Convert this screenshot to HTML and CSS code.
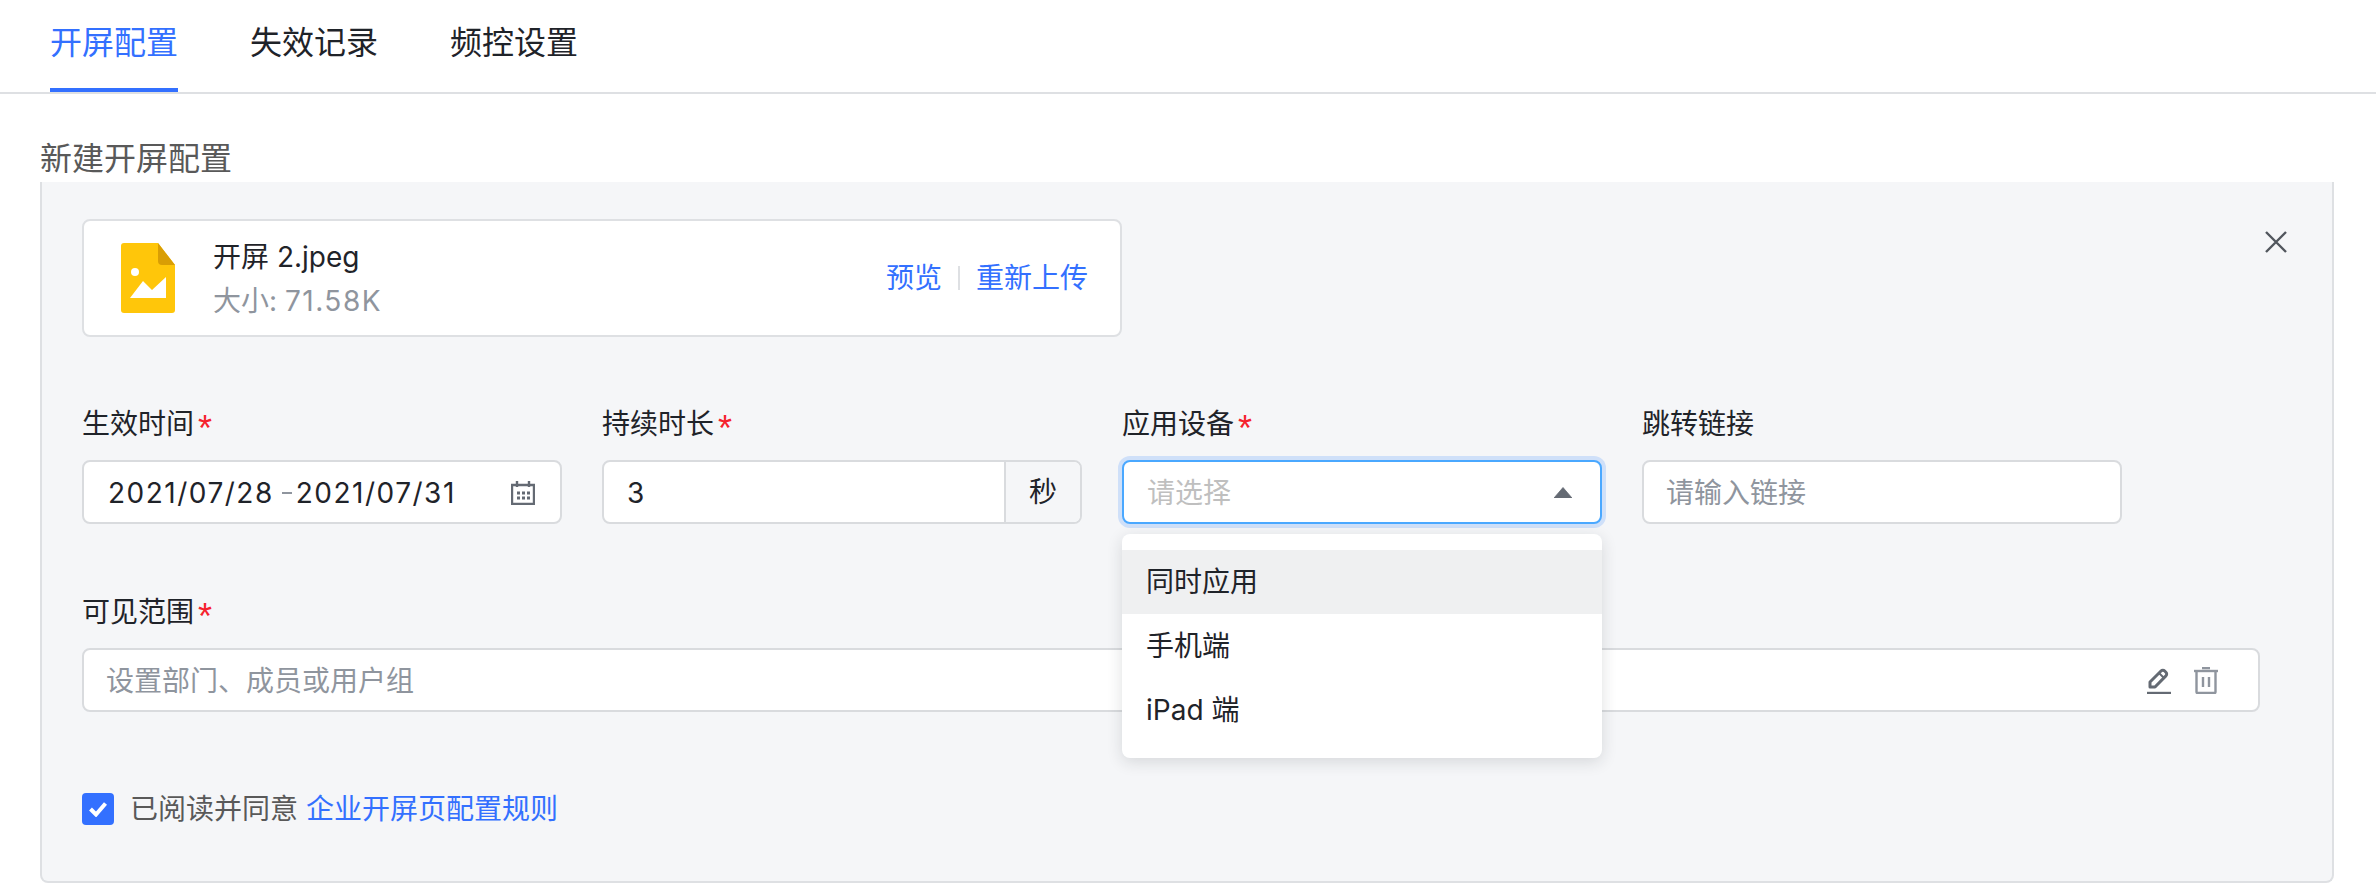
FILE: index.html
```html
<!DOCTYPE html>
<html lang="zh-CN">
<head>
<meta charset="utf-8">
<title>开屏配置</title>
<link rel="stylesheet" href="styles.css">
</head>
<body>
<nav class="tabs">
  <a class="tab tab-active">开屏配置</a>
  <a class="tab">失效记录</a>
  <a class="tab">频控设置</a>
</nav>
<h2 class="title">新建开屏配置</h2>
<section class="panel">
  <button class="close" aria-label="关闭">
    <svg width="24" height="24" viewBox="0 0 24 24"><path d="M2 2 L22 22 M22 2 L2 22" stroke="#51565d" stroke-width="2.4" fill="none"/></svg>
  </button>
  <div class="file-card">
    <svg class="file-icon" width="54" height="70" viewBox="0 0 54 70">
      <path d="M3 0 H37 L54 22 V67 a3 3 0 0 1 -3 3 H3 a3 3 0 0 1 -3 -3 V3 a3 3 0 0 1 3 -3 Z" fill="#ffc60a"/>
      <path d="M37 0 L54 22 H41 a4 4 0 0 1 -4 -4 Z" fill="#d99e04"/>
      <circle cx="14" cy="29" r="4" fill="#fff"/>
      <path d="M9 55 L22 38 L31 47 L45 34 V55 Z" fill="#fff"/>
    </svg>
    <div class="file-info">
      <div class="file-name">开屏 2.jpeg</div>
      <div class="file-size">大小: <span class="num-size">71.58K</span></div>
    </div>
    <div class="file-actions">
      <a class="link">预览</a>
      <span class="divider"></span>
      <a class="link">重新上传</a>
    </div>
  </div>
  <div class="form-row">
    <div class="field">
      <label class="label">生效时间<span class="req">*</span></label>
      <div class="input input-date">
        <span class="value">2021/07/28</span><span class="dash"></span><span class="value">2021/07/31</span>
        <svg class="cal" width="24" height="24" viewBox="0 0 24 24" fill="none">
          <path d="M1 4 H23 V23 H1 Z" stroke="#646a73" stroke-width="2.4"/>
          <path d="M6 0 V6 M18 0 V6" stroke="#646a73" stroke-width="2.4"/>
          <path d="M6 12 h3 M11 12 h3 M16 12 h3 M6 17 h3 M11 17 h3 M16 17 h3" stroke="#646a73" stroke-width="2.8"/>
        </svg>
      </div>
    </div>
    <div class="field">
      <label class="label">持续时长<span class="req">*</span></label>
      <div class="input input-group">
        <span class="text grow">3</span>
        <span class="addon">秒</span>
      </div>
    </div>
    <div class="field">
      <label class="label">应用设备<span class="req">*</span></label>
      <div class="select-wrap">
        <div class="input input-focus">
          <span class="placeholder-light">请选择</span>
          <svg class="caret" width="18" height="11" viewBox="0 0 18 11"><path d="M9 0.500 L18 11 H0 Z" fill="#646a73" stroke="#646a73" stroke-width="0.8" stroke-linejoin="round"/></svg>
        </div>
        <ul class="menu">
          <li class="menu-item menu-item-hover">同时应用</li>
          <li class="menu-item">手机端</li>
          <li class="menu-item">iPad 端</li>
        </ul>
      </div>
    </div>
    <div class="field">
      <label class="label">跳转链接</label>
      <div class="input"><span class="placeholder">请输入链接</span></div>
    </div>
  </div>
  <div class="field field-wide">
    <label class="label">可见范围<span class="req">*</span></label>
    <div class="input">
      <span class="placeholder">设置部门、成员或用户组</span>
      <span class="icons">
        <svg width="24" height="26" viewBox="0 0 24 26" fill="none">
          <path d="M3 14 L14 3 a2.6 2.6 0 0 1 3.7 0 l1.2 1.2 a2.6 2.6 0 0 1 0 3.7 L8 19 H3 Z" stroke="#646a73" stroke-width="3" stroke-linejoin="round"/>
          <path d="M12 5 L17 10" stroke="#646a73" stroke-width="2"/>
          <path d="M0 25 H24" stroke="#646a73" stroke-width="2.4"/>
        </svg>
        <svg width="24" height="27" viewBox="0 0 24 27" fill="none">
          <path d="M0 4 H24" stroke="#8f959e" stroke-width="2.4"/>
          <path d="M8 1 H16" stroke="#8f959e" stroke-width="2.6"/>
          <path d="M2.5 4 V25 a1 1 0 0 0 1 1 H20.500 a1 1 0 0 0 1 -1 V4" stroke="#8f959e" stroke-width="2.4"/>
          <path d="M9 10 V20 M15 10 V20" stroke="#8f959e" stroke-width="2.4"/>
        </svg>
      </span>
    </div>
  </div>
  <div class="agree">
    <span class="checkbox">
      <svg width="20" height="16" viewBox="0 0 20 16"><path d="M2.500 8 L8 13.500 L17.500 2.500" stroke="#fff" stroke-width="4" fill="none"/></svg>
    </span>
    <span class="agree-text">已阅读并同意 <a class="link">企业开屏页配置规则</a></span>
  </div>
</section>
</body>
</html>
```
FILE: styles.css
```css
* { box-sizing: border-box; }
html, body { margin: 0; padding: 0; }
body {
  background: #fff;
  color: #1f2329;
  font-family: Inter, "Noto Sans CJK SC", sans-serif;
  font-size: 28px;
  line-height: 40px;
}
.tabs {
  display: flex;
  gap: 72px;
  height: 94px;
  padding-left: 50px;
  border-bottom: 2px solid #dee0e3;
}
.tab {
  height: 92px;
  padding-top: 21px;
  font-size: 32px;
  line-height: 44px;
  border-bottom: 4px solid transparent;
}
.tab-active { color: #3370ff; border-bottom-color: #3370ff; }
.title {
  margin: 43px 0 1px 40px;
  font-size: 32px;
  line-height: 44px;
  font-weight: 400;
  color: #595959;
}
.panel {
  position: relative;
  margin: 0 42px 0 40px;
  padding: 37px 72px 52px 40px;
  background: #f5f6f8;
  border: 2px solid #dee0e3;
  border-top: 0;
  border-radius: 0 0 8px 8px;
}
.close {
  position: absolute;
  top: 48px;
  right: 44px;
  width: 24px;
  height: 24px;
  padding: 0;
  border: 0;
  background: none;
  display: flex;
}
.file-card {
  display: flex;
  align-items: center;
  width: 1040px;
  height: 118px;
  padding: 0 32px 0 37px;
  background: #fff;
  border: 2px solid #dee0e3;
  border-radius: 8px;
}
.file-icon { flex: none; margin-right: 38px; }
.file-info { flex: 1; }
.file-name { line-height: 40px; margin-top: 2px; }
.file-size { line-height: 40px; margin-top: 4px; color: #8f959e; }
.num-size { letter-spacing: 1.5px; }
.file-actions { display: flex; align-items: center; gap: 16px; }
.link { color: #3370ff; }
.divider { width: 2px; height: 24px; background: #dee0e3; }
.form-row {
  display: grid;
  grid-template-columns: repeat(4, 480px);
  gap: 40px;
  margin-top: 67px;
}
.field { display: flex; flex-direction: column; gap: 16px; }
.field-wide { margin-top: 68px; }
.label { display: block; height: 40px; }
.req {
  margin-left: 4px;
  color: #f5222d;
  font-family: "Liberation Sans", sans-serif;
  font-size: 36px;
  line-height: 0;
  vertical-align: -7px;
}
.input {
  display: flex;
  align-items: center;
  height: 64px;
  padding: 1px 22px 0;
  background: #fff;
  border: 2px solid #d9dbde;
  border-radius: 8px;
}
.input-date { padding-left: 24px; }
.input-group { padding: 1px 0 0 23px; }
.grow { flex: 1; }
.addon {
  align-self: stretch;
  display: flex;
  align-items: center;
  justify-content: center;
  width: 76px;
  margin-top: -1px;
  background: #f5f6f8;
  border-left: 2px solid #d9dbde;
  border-radius: 0 6px 6px 0;
}
.value { letter-spacing: 1.5px; }
.dash {
  width: 10px;
  height: 2px;
  margin: 0 4px 0 8px;
  background: #8f959e;
}
.cal { margin-left: auto; margin-right: 3px; }
.select-wrap { position: relative; }
.input-focus {
  border-color: #4aa8ff;
  box-shadow: 0 0 0 4px #cfe0f9;
}
.input-focus .placeholder-light { margin-left: 1px; }
.placeholder { color: #8f959e; }
.placeholder-light { color: #bfbfbf; }
.caret { margin-left: auto; margin-right: 6px; }
.menu {
  position: absolute;
  z-index: 2;
  top: 74px;
  left: 0;
  width: 480px;
  margin: 0;
  padding: 16px 0;
  list-style: none;
  background: #fff;
  border-radius: 8px;
  box-shadow: 0 4px 16px rgba(31, 35, 41, 0.14);
}
.menu-item { height: 64px; padding: 0 24px; line-height: 64px; }
.menu-item-hover { background: #eff0f1; }
.icons { display: flex; align-items: center; gap: 23px; margin-left: auto; margin-right: 18px; }
.icons svg { display: block; }
.agree { display: flex; align-items: center; gap: 16px; margin-top: 77px; }
.checkbox {
  display: flex;
  align-items: center;
  justify-content: center;
  width: 32px;
  height: 32px;
  background: #3370ff;
  border-radius: 4px;
}
.agree-text { color: #595959; }
```
